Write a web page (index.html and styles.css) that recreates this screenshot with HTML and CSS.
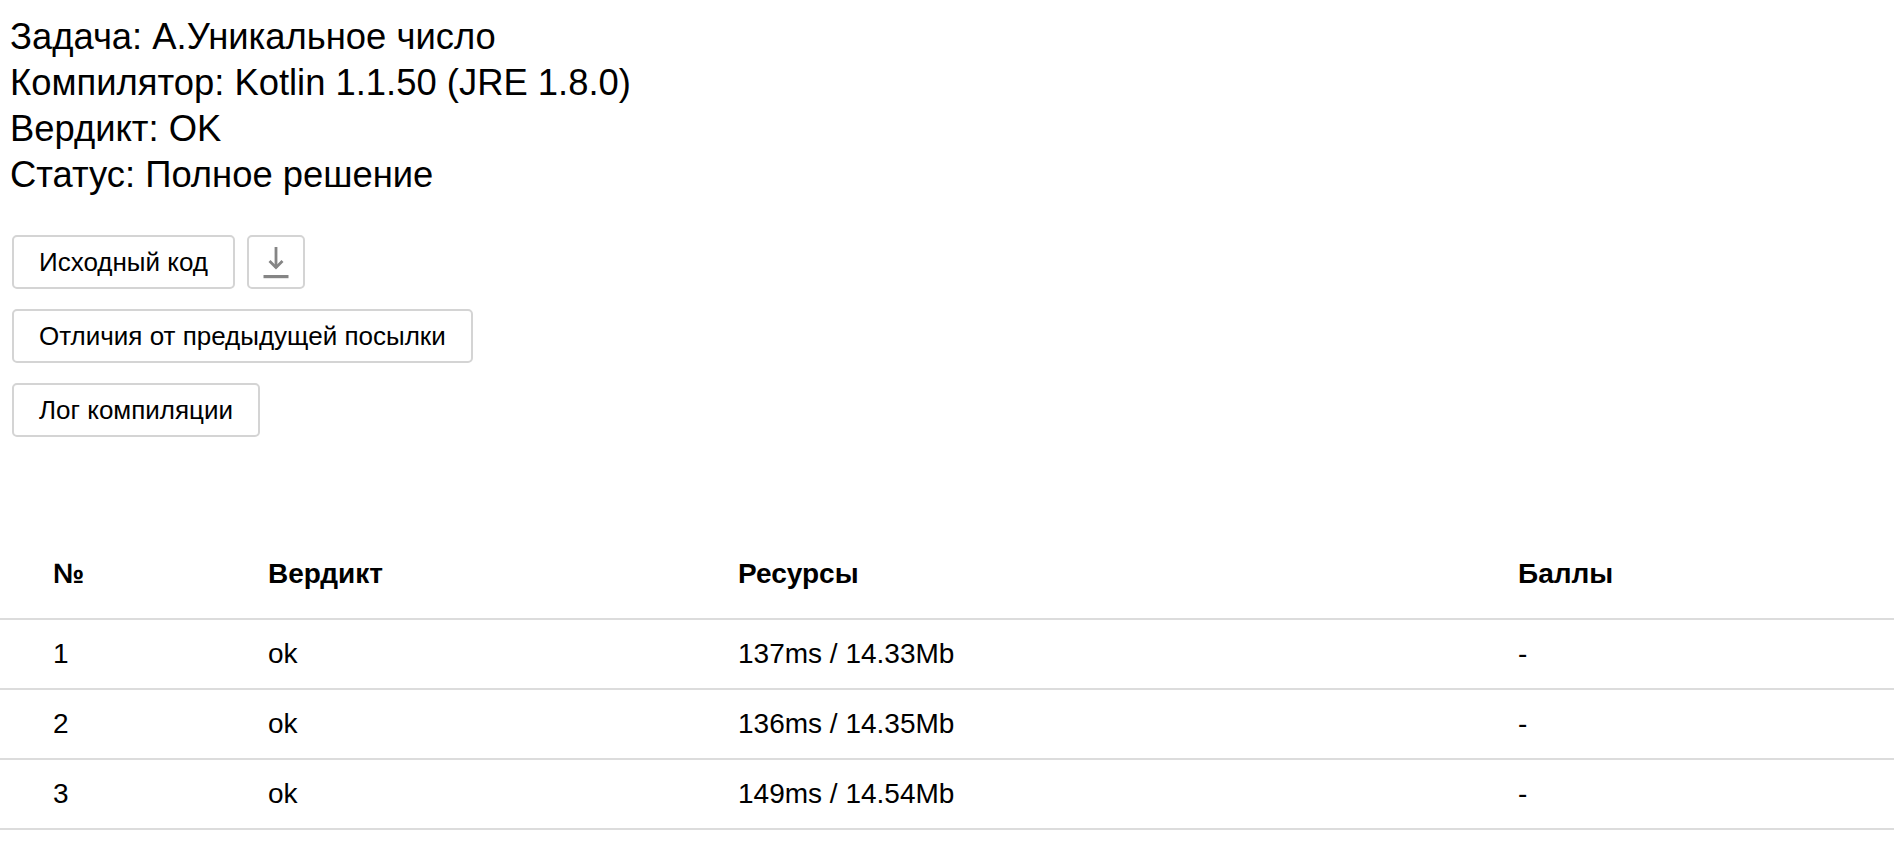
FILE: index.html
```html
<!DOCTYPE html>
<html lang="ru">
<head>
<meta charset="utf-8">
<title>Посылка</title>
<link rel="stylesheet" href="styles.css">
</head>
<body>
<div class="info">
  <div class="line">Задача: A.Уникальное число</div>
  <div class="line">Компилятор: Kotlin 1.1.50 (JRE 1.8.0)</div>
  <div class="line">Вердикт: OK</div>
  <div class="line">Статус: Полное решение</div>
</div>
<div class="actions">
  <div class="btn-row">
    <button class="btn">Исходный код</button>
    <button class="btn btn-icon" aria-label="Скачать">
      <svg width="30" height="36" viewBox="0 0 30 36">
        <path d="M15 3 V24" stroke="#858585" stroke-width="2.8" fill="none"/>
        <path d="M8.5 17 L15 23.5 L21.5 17" stroke="#858585" stroke-width="2.8" fill="none"/>
        <rect x="2.5" y="31" width="25" height="3.2" fill="#858585"/>
      </svg>
    </button>
  </div>
  <div class="btn-row">
    <button class="btn">Отличия от предыдущей посылки</button>
  </div>
  <div class="btn-row">
    <button class="btn">Лог компиляции</button>
  </div>
</div>
<div class="tests">
  <div class="trow thead">
    <div class="cell">№</div>
    <div class="cell">Вердикт</div>
    <div class="cell">Ресурсы</div>
    <div class="cell">Баллы</div>
  </div>
  <div class="trow">
    <div class="cell">1</div>
    <div class="cell">ok</div>
    <div class="cell">137ms / 14.33Mb</div>
    <div class="cell">-</div>
  </div>
  <div class="trow">
    <div class="cell">2</div>
    <div class="cell">ok</div>
    <div class="cell">136ms / 14.35Mb</div>
    <div class="cell">-</div>
  </div>
  <div class="trow">
    <div class="cell">3</div>
    <div class="cell">ok</div>
    <div class="cell">149ms / 14.54Mb</div>
    <div class="cell">-</div>
  </div>
</div>
</body>
</html>
```
FILE: styles.css
```css
html, body {
  margin: 0;
  padding: 0;
  background: #fff;
}
body {
  font-family: "Liberation Sans", Arial, Helvetica, sans-serif;
  color: #000;
}
.info {
  padding: 14px 0 0 10px;
  font-size: 36.4px;
  line-height: 46px;
}
.actions {
  margin-top: 37px;
  padding-left: 12px;
  display: flex;
  flex-direction: column;
  gap: 20px;
}
.btn-row {
  display: flex;
  gap: 12px;
}
.btn {
  height: 54px;
  box-sizing: border-box;
  padding: 0 25px;
  border: 2px solid #d4d4d4;
  border-radius: 5px;
  background: #fff;
  font-family: "Liberation Sans", Arial, Helvetica, sans-serif;
  font-size: 26px;
  color: #000;
  display: flex;
  align-items: center;
}
.btn-icon {
  width: 58px;
  padding: 0;
  justify-content: center;
}
.tests {
  margin-top: 92px;
}
.trow {
  display: grid;
  grid-template-columns: 215px 470px 780px 1fr;
  height: 70px;
  box-sizing: border-box;
  border-bottom: 2px solid #dcdcdc;
  align-items: center;
  font-size: 28px;
}
.thead {
  height: 91px;
  font-weight: bold;
}
.cell {
  padding-left: 53px;
}
```
